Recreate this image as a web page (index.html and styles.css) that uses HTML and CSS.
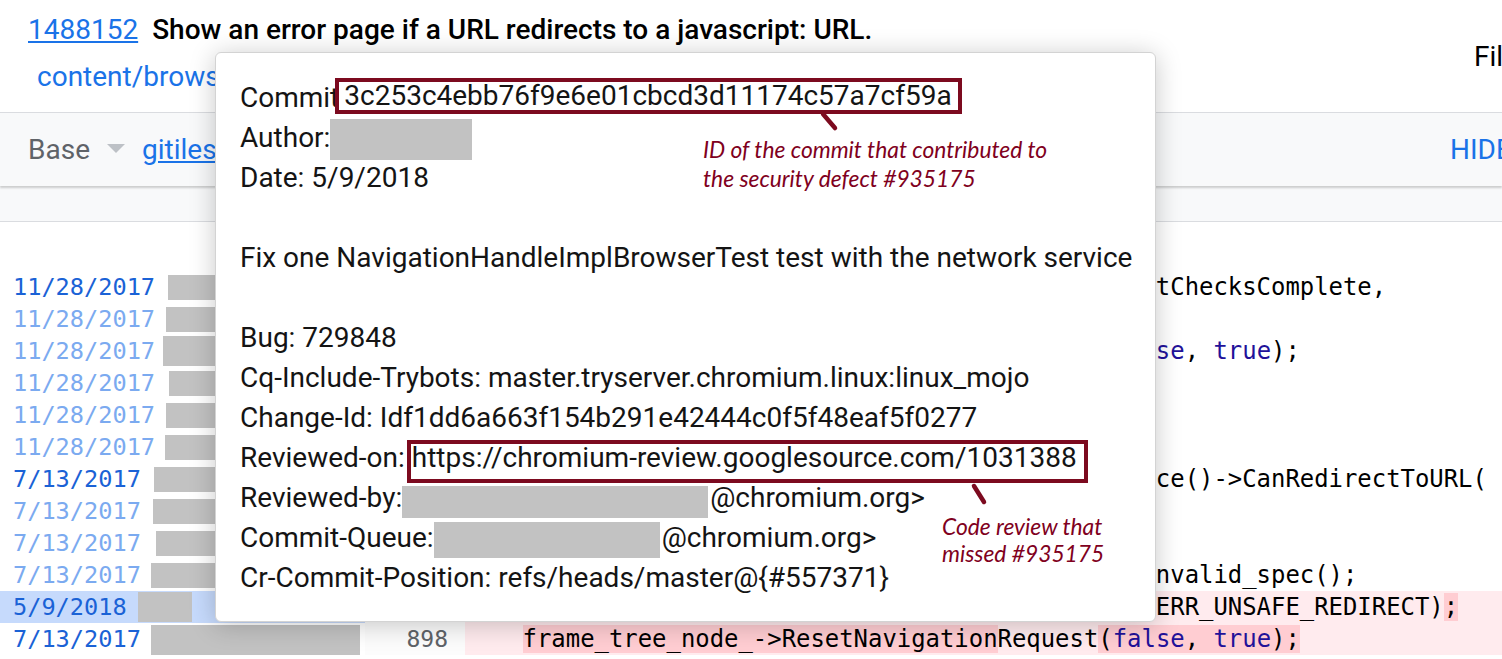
FILE: index.html
```html
<!DOCTYPE html>
<html>
<head>
<meta charset="utf-8">
<title>Blame</title>
<link rel="stylesheet" href="styles.css">
</head>
<body>
<div class="page">
  <header class="hdr">
    <div class="hdr-left">
      <div class="title"><a class="cl">1488152</a><span class="subject">Show an error page if a URL redirects to a javascript: URL.</span></div>
      <div class="path">content/browser/frame_host/navigation_request.cc</div>
    </div>
    <div class="files">Files</div>
  </header>

  <div class="toolbar">
    <span class="base">Base</span>
    <span class="caret"></span>
    <a class="gitiles">gitiles</a>
    <span class="hide">HIDE LEFT</span>
  </div>
  <div class="band"></div>

  <div class="diff">
    <div class="row">
      <div class="blame"><span class="date first">11/28/2017</span><span class="redact" style="margin-left:13px;width:80px"></span></div>
      <div class="ln"></div>
      <div class="code">        base::Bind(&amp;NavigationRequest::OnRedirectChecksComplete,</div>
    </div>
    <div class="row">
      <div class="blame"><span class="date">11/28/2017</span><span class="redact" style="margin-left:11px;width:80px"></span></div>
      <div class="ln"></div>
      <div class="code">                 base::Unretained(this)));</div>
    </div>
    <div class="row">
      <div class="blame"><span class="date">11/28/2017</span><span class="redact tall" style="margin-left:8px;width:80px"></span></div>
      <div class="ln"></div>
      <div class="code">    frame_tree_node_-&gt;ResetNavigationRequest(<span class="kw">false</span>, <span class="kw">true</span>);</div>
    </div>
    <div class="row">
      <div class="blame"><span class="date">11/28/2017</span><span class="redact" style="margin-left:14px;width:80px"></span></div>
      <div class="ln"></div>
      <div class="code">    return;</div>
    </div>
    <div class="row">
      <div class="blame"><span class="date">11/28/2017</span><span class="redact" style="margin-left:11px;width:80px"></span></div>
      <div class="ln"></div>
      <div class="code">  }</div>
    </div>
    <div class="row">
      <div class="blame"><span class="date">11/28/2017</span><span class="redact" style="margin-left:10px;width:80px"></span></div>
      <div class="ln"></div>
      <div class="code"></div>
    </div>
    <div class="row">
      <div class="blame"><span class="date first">7/13/2017</span><span class="redact" style="margin-left:13px;width:80px"></span></div>
      <div class="ln"></div>
      <div class="code">  if (!ChildProcessSecurityPolicyImpl::GetInstance()-&gt;CanRedirectToURL(</div>
    </div>
    <div class="row">
      <div class="blame"><span class="date">7/13/2017</span><span class="redact" style="margin-left:12px;width:80px"></span></div>
      <div class="ln"></div>
      <div class="code">          redirect_info.new_url)) {</div>
    </div>
    <div class="row">
      <div class="blame"><span class="date">7/13/2017</span><span class="redact" style="margin-left:15px;width:80px"></span></div>
      <div class="ln"></div>
      <div class="code">    DVLOG(1) &lt;&lt; "Denied redirect for "</div>
    </div>
    <div class="row">
      <div class="blame"><span class="date">7/13/2017</span><span class="redact" style="margin-left:10px;width:80px"></span></div>
      <div class="ln"></div>
      <div class="code">             &lt;&lt; redirect_info.new_url.possibly_invalid_spec();</div>
    </div>
    <div class="row sel del">
      <div class="blame"><span class="date first">5/9/2018</span><span class="redact full" style="margin-left:11px;width:54px"></span></div>
      <div class="ln"></div>
      <div class="code">    navigation_handle_-&gt;set_net_error_code(net::ERR_UNSAFE_REDIRECT)<span class="hl">;</span></div>
    </div>
    <div class="row del">
      <div class="blame"><span class="date first">7/13/2017</span><span class="redact low" style="margin-left:10px;width:209px"></span></div>
      <div class="ln">898</div>
      <div class="code">    <span class="hl">frame_tree_node_-&gt;ResetNavigation</span>Request<span class="hl">(<span class="kw">false</span>, <span class="kw">true</span>);</span></div>
    </div>
  </div>

  <div class="popup">
    <div class="pl">Commit<span class="mark mark-commit">3c253c4ebb76f9e6e01cbcd3d11174c57a7cf59a</span></div>
    <div class="pl">Author:<span class="redact r-author"></span></div>
    <div class="pl">Date: 5/9/2018</div>
    <div class="pl"></div>
    <div class="pl">Fix one NavigationHandleImplBrowserTest test with the network service</div>
    <div class="pl"></div>
    <div class="pl">Bug: 729848</div>
    <div class="pl">Cq-Include-Trybots: master.tryserver.chromium.linux:linux_mojo</div>
    <div class="pl">Change-Id: Idf1dd6a663f154b291e42444c0f5f48eaf5f0277</div>
    <div class="pl">Reviewed-on:<span class="mark mark-review">https://chromium-review.googlesource.com/1031388</span></div>
    <div class="pl">Reviewed-by:<span class="redact r-rb"></span>@chromium.org&gt;</div>
    <div class="pl">Commit-Queue:<span class="redact r-cq"></span>@chromium.org&gt;</div>
    <div class="pl">Cr-Commit-Position: refs/heads/master@{#557371}</div>

    <svg class="callouts" width="941" height="570" viewBox="0 0 941 570">
      <line x1="607" y1="61" x2="619" y2="75" />
      <line x1="758" y1="433" x2="768" y2="449" />
    </svg>
    <div class="note n1">ID of the commit that contributed to<br>the security defect #935175</div>
    <div class="note n2">Code review that<br>missed #935175</div>
  </div>
</div>
</body>
</html>
```

FILE: styles.css
```css
html, body {
  margin: 0;
  padding: 0;
  background: #ffffff;
}
body {
  width: 1502px;
  height: 659px;
  overflow: hidden;
  font-family: Roboto, "Liberation Sans", Arial, sans-serif;
  color: #202124;
}
.page {
  position: relative;
  width: 1502px;
  height: 659px;
  overflow: hidden;
}

/* header */
.hdr {
  height: 112px;
  display: flex;
  border-bottom: 1px solid #dadce0;
  white-space: nowrap;
}
.hdr-left {
  padding-left: 28px;
  padding-top: 10px;
}
.title {
  display: flex;
  align-items: baseline;
  height: 40px;
  line-height: 40px;
  font-size: 28px;
}
.cl {
  color: #1a73e8;
  text-decoration: underline;
  margin-right: 14px;
}
.subject {
  font-weight: 500;
  color: #000;
}
.path {
  padding-left: 9px;
  padding-top: 10px;
  line-height: 34px;
  font-size: 28px;
  color: #1a73e8;
}
.files {
  margin-left: auto;
  padding-top: 40px;
  line-height: 34px;
  font-size: 28px;
  color: #000;
  width: 28px;
  overflow: hidden;
}

/* toolbar */
.toolbar {
  height: 73px;
  background: #f8f9fa;
  display: flex;
  align-items: center;
  padding-left: 28px;
  font-size: 28px;
  white-space: nowrap;
  box-shadow: 0 2px 2px rgba(0,0,0,0.18);
  position: relative;
  z-index: 1;
}
.base {
  color: #5f6368;
}
.caret {
  width: 0;
  height: 0;
  border-left: 9px solid transparent;
  border-right: 9px solid transparent;
  border-top: 9px solid #bdc1c6;
  margin-left: 17px;
  margin-right: 17px;
  margin-top: -3px;
}
.gitiles {
  color: #1a73e8;
  text-decoration: underline;
}
.hide {
  margin-left: auto;
  color: #1a73e8;
  width: 52px;
  overflow: hidden;
}
.band {
  height: 35px;
  background: #f8f9fa;
  border-bottom: 1px solid #dadce0;
}

/* diff rows */
.diff {
  padding-top: 49px;
  font-family: "DejaVu Sans Mono", "Liberation Mono", monospace;
  font-size: 23.92px;
}
.row {
  display: grid;
  grid-template-columns: 365px 100px 1fr;
  height: 32px;
}
.blame {
  display: flex;
  align-items: center;
  padding-left: 13px;
  white-space: nowrap;
  overflow: hidden;
  font-size: 23.6px;
}
.date {
  color: #7baaf0;
  line-height: 32px;
}
.date.first {
  color: #1a62d6;
}
.redact {
  display: inline-block;
  height: 25px;
  background: #c2c2c2;
  flex: none;
}
.redact.tall { height: 30px; }
.redact.full { height: 30px; }
.redact.low { height: 34px; align-self: flex-end; margin-bottom: -4px; }
.sel .blame {
  background: #c6dafc;
}
.ln {
  text-align: right;
  padding-right: 17px;
  line-height: 32px;
  color: #5f6368;
  font-size: 23px;
  background: #fcfcfc;
}
.code {
  white-space: pre;
  line-height: 32px;
  color: #000;
  overflow: hidden;
}
.kw {
  color: #221199;
}
.del .code {
  background: #ffebee;
}
.hl {
  background: #ffcdd2;
}

/* popup */
.popup {
  position: absolute;
  left: 215px;
  top: 52px;
  width: 941px;
  height: 570px;
  box-sizing: border-box;
  padding: 24px 0 0 24px;
  background: #fff;
  border: 1px solid #d3d3d3;
  border-radius: 6px;
  box-shadow: 0 3px 26px rgba(0,0,0,0.22);
  z-index: 5;
  font-family: Roboto, "Liberation Sans", Arial, sans-serif;
  font-size: 28px;
  color: #141414;
  white-space: nowrap;
}
.pl {
  height: 40px;
  display: flex;
  align-items: center;
}
.mark {
  box-sizing: border-box;
  border: 4.5px solid #7c0a1f;
  display: inline-block;
  line-height: 27px;
}
.mark-commit {
  height: 36px;
  margin-top: -2px;
  margin-left: -4px;
  padding: 0 6px 0 5px;
}
.mark-review {
  height: 43px;
  margin-top: 8px;
  margin-left: 2px;
  padding: 0 7px 2px 1px;
}
.redact.r-author {
  width: 142px;
  height: 41px;
  margin-top: 5px;
}
.redact.r-rb {
  width: 306px;
  height: 32px;
  margin-top: 10px;
  margin-right: 2px;
}
.redact.r-cq {
  width: 226px;
  height: 36px;
  margin-top: 6px;
  margin-right: 2px;
}
.callouts {
  position: absolute;
  left: 0;
  top: 0;
}
.callouts line {
  stroke: #7c0a1f;
  stroke-width: 4.5;
  stroke-linecap: round;
}
.note {
  position: absolute;
  font-family: Lato, "Open Sans", sans-serif;
  font-style: italic;
  font-size: 22.8px;
  color: #800020;
}
.n1 {
  left: 487px;
  top: 82px;
  line-height: 29px;
}
.n2 {
  left: 726px;
  top: 460px;
  line-height: 27px;
}
```
